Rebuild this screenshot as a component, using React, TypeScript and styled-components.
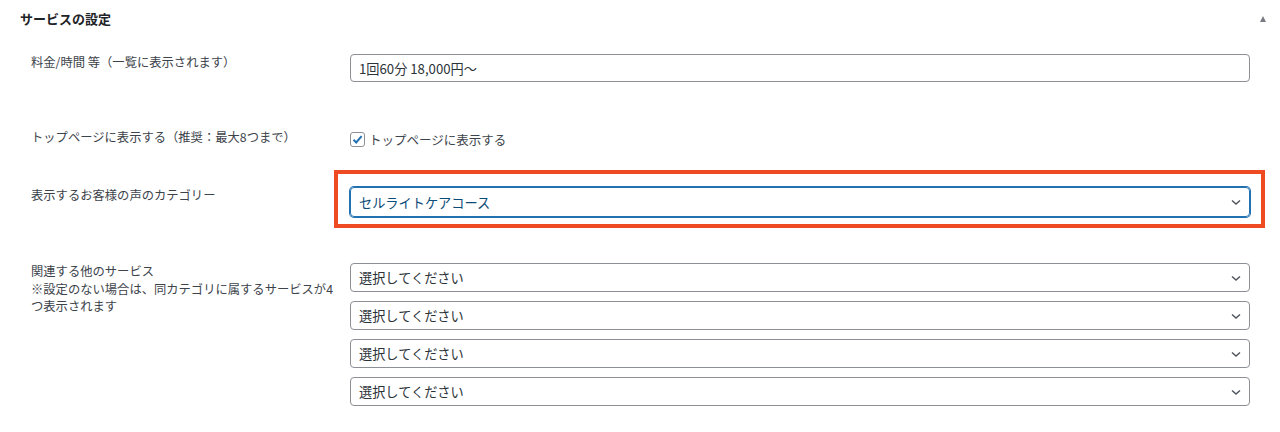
import React from "react";
import styled, { createGlobalStyle } from "styled-components";

const Global = createGlobalStyle`
  html, body { margin: 0; padding: 0; background: #fff; }
  body {
    font-family: "Noto Sans CJK JP", "Noto Sans", "Liberation Sans", sans-serif;
    color: #3c434a;
    font-size: 13px;
  }
`;

const Panel = styled.section`
  width: 1280px;
  height: 432px;
  background: #fff;
  box-sizing: border-box;
  overflow: hidden;
`;

const Header = styled.div`
  display: flex;
  align-items: center;
  justify-content: space-between;
  height: 36px;
  padding: 0 14px 0 20px;
`;

const Title = styled.h2`
  margin: 0;
  font-size: 13px;
  font-weight: 700;
  color: #1d2327;
  line-height: 1;
`;

const Toggle = styled.span`
  width: 0;
  height: 0;
  border-left: 3.5px solid transparent;
  border-right: 3.5px solid transparent;
  border-bottom: 6px solid #787c82;
  margin-top: 1px;
`;

const Body = styled.div`
  display: flex;
  flex-direction: column;
  padding: 0 30px 0 31px;
`;

const Row = styled.div<{ $top: number }>`
  display: grid;
  grid-template-columns: 319px 900px;
  align-items: start;
  margin-top: ${(p) => p.$top}px;
`;

const Label = styled.div<{ $offset?: number }>`
  font-size: 12.3px;
  line-height: 17.5px;
  color: #3c434a;
  padding-top: ${(p) => p.$offset ?? 0}px;
  padding-right: 8px;
`;

const Field = styled.div`
  display: flex;
  flex-direction: column;
  gap: 9px;
`;

const TextInput = styled.div`
  box-sizing: border-box;
  height: 28px;
  border: 1px solid #8c8f94;
  border-radius: 4px;
  padding: 0 8px;
  display: flex;
  align-items: center;
  font-size: 13.2px;
  color: #2c3338;
`;

const Select = styled.div<{ $focus?: boolean }>`
  position: relative;
  box-sizing: border-box;
  height: ${(p) => (p.$focus ? 30 : 29)}px;
  border: 1px solid ${(p) => (p.$focus ? "#2271b1" : "#8c8f94")};
  box-shadow: ${(p) => (p.$focus ? "0 0 0 1px #2271b1" : "none")};
  border-radius: 4px;
  padding: 0 8px;
  display: flex;
  align-items: center;
  justify-content: space-between;
  font-size: 13.2px;
  color: ${(p) => (p.$focus ? "#0a4b78" : "#2c3338")};
`;

const Chevron = styled.svg`
  width: 12px;
  height: 12px;
  flex: none;
  margin-right: -1px;
`;

const Highlight = styled.span`
  position: absolute;
  top: -18px;
  left: -17px;
  right: -16px;
  bottom: -12px;
  border: 4px solid #ef4b23;
  pointer-events: none;
`;

const CheckLine = styled.label`
  display: flex;
  align-items: center;
  gap: 4px;
  font-size: 12.5px;
  color: #3c434a;
  height: 20px;
`;

const Box = styled.span`
  box-sizing: border-box;
  width: 15px;
  height: 15px;
  border: 1px solid #8c8f94;
  border-radius: 3px;
  display: flex;
  align-items: center;
  justify-content: center;
`;

const ChevronIcon = () => (
  <Chevron viewBox="0 0 12 12">
    <path d="M2 4.5 L6 8 L10 4.5" fill="none" stroke="#50575e" strokeWidth="1.5" />
  </Chevron>
);

export default function App() {
  return (
    <>
      <Global />
      <Panel>
        <Header>
          <Title>サービスの設定</Title>
          <Toggle />
        </Header>
        <Body>
          <Row $top={18}>
            <Label>料金/時間 等（一覧に表示されます）</Label>
            <Field>
              <TextInput>1回60分 18,000円〜</TextInput>
            </Field>
          </Row>
          <Row $top={47}>
            <Label>トップページに表示する（推奨：最大8つまで）</Label>
            <Field>
              <CheckLine>
                <Box>
                  <svg width="13" height="13" viewBox="0 0 13 13">
                    <path d="M2.5 6.8 L5.2 9.5 L10.6 3.2" fill="none" stroke="#2271b1" strokeWidth="2" />
                  </svg>
                </Box>
                トップページに表示する
              </CheckLine>
            </Field>
          </Row>
          <Row $top={38}>
            <Label>表示するお客様の声のカテゴリー</Label>
            <Field>
              <Select $focus>
                セルライトケアコース
                <ChevronIcon />
                <Highlight />
              </Select>
            </Field>
          </Row>
          <Row $top={46}>
            <Label $offset={-2}>
              関連する他のサービス
              <br />
              ※設定のない場合は、同カテゴリに属するサービスが4つ表示されます
            </Label>
            <Field>
              {[0, 1, 2, 3].map((i) => (
                <Select key={i}>
                  選択してください
                  <ChevronIcon />
                </Select>
              ))}
            </Field>
          </Row>
        </Body>
      </Panel>
    </>
  );
}
